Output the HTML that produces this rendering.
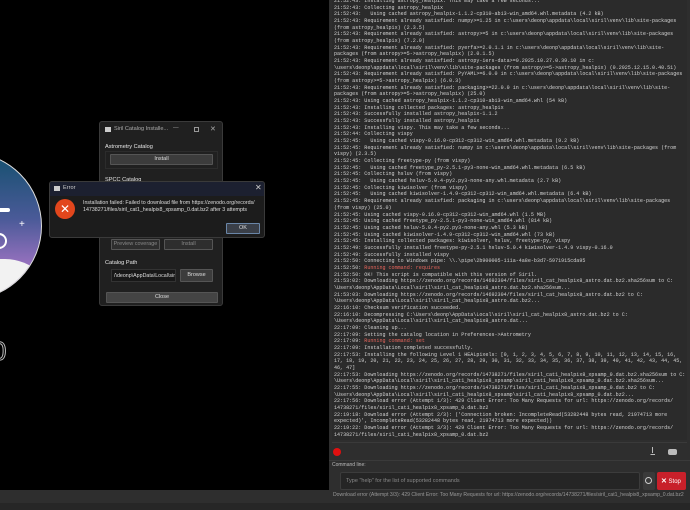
<!DOCTYPE html>
<html><head><meta charset="utf-8"><style>
*{margin:0;padding:0;box-sizing:border-box}
body{width:690px;height:510px;background:#000;position:relative;overflow:hidden;font-family:"Liberation Sans",sans-serif}
.abs{position:absolute}
#log{position:absolute;left:332px;top:0;width:355px;height:440px;background:#2b2b2b;overflow:hidden}
#log pre{position:absolute;left:2px;top:-2px;font-family:"Liberation Mono",monospace;font-size:5.05px;line-height:6.67px;color:#d2d2d2;white-space:pre}
.r{color:#e8655c}
.btn{position:absolute;background:#3c3c3c;border:1px solid #555;color:#ddd;font-size:5.5px;text-align:center;border-radius:1px}
.lbl{position:absolute;color:#e6e6e6;font-size:5.6px}
</style></head><body>
<!-- left logo -->
<div class="abs" style="left:-106px;top:152px;width:148px;height:148px;border-radius:50%;background:linear-gradient(#14506e 0%,#4a5a98 45%,#9a72c0 78%);overflow:hidden;border:1px solid #ddd">
 <div class="abs" style="left:-10px;top:106px;width:170px;height:60px;background:#f2f2f2;border-radius:40px 50px 0 0"></div>
 <div class="abs" style="left:96px;top:80px;width:16px;height:16px;border:2px solid #fff;border-radius:50%"></div>
 <div class="abs" style="left:95px;top:55px;width:20px;height:4px;background:#fff;border-radius:2px"></div>
</div>
<div class="abs" style="left:19px;top:219px;color:#fff;font-size:10px">+</div>
<div class="abs" style="left:-8px;top:336px;color:#000;font-size:26px;-webkit-text-stroke:1px #bbb">0</div>
<!-- right panel background -->
<div class="abs" style="left:329px;top:0;width:361px;height:510px;background:#2e2e2e"></div>
<div class="abs" style="left:0;top:490px;width:690px;height:20px;background:#2e2e2e"></div>
<div class="abs" style="left:0;top:503px;width:690px;height:7px;background:#262626"></div>
<div id="log"><pre>21:52:43: Installing astropy_healpix. This may take a few seconds...
21:52:43: Collecting astropy_healpix
21:52:43:   Using cached astropy_healpix-1.1.2-cp310-abi3-win_amd64.whl.metadata (4.2 kB)
21:52:43: Requirement already satisfied: numpy>=1.25 in c:\users\deonp\appdata\local\siril\venv\lib\site-packages
(from astropy_healpix) (2.3.5)
21:52:43: Requirement already satisfied: astropy>=5 in c:\users\deonp\appdata\local\siril\venv\lib\site-packages
(from astropy_healpix) (7.2.0)
21:52:43: Requirement already satisfied: pyerfa>=2.0.1.1 in c:\users\deonp\appdata\local\siril\venv\lib\site-
packages (from astropy>=5->astropy_healpix) (2.0.1.5)
21:52:43: Requirement already satisfied: astropy-iers-data>=0.2025.10.27.0.39.10 in c:
\users\deonp\appdata\local\siril\venv\lib\site-packages (from astropy>=5->astropy_healpix) (0.2025.12.15.0.40.51)
21:52:43: Requirement already satisfied: PyYAML>=6.0.0 in c:\users\deonp\appdata\local\siril\venv\lib\site-packages
(from astropy>=5->astropy_healpix) (6.0.3)
21:52:43: Requirement already satisfied: packaging>=22.0.0 in c:\users\deonp\appdata\local\siril\venv\lib\site-
packages (from astropy>=5->astropy_healpix) (25.0)
21:52:43: Using cached astropy_healpix-1.1.2-cp310-abi3-win_amd64.whl (54 kB)
21:52:43: Installing collected packages: astropy_healpix
21:52:43: Successfully installed astropy_healpix-1.1.2
21:52:43: Successfully installed astropy_healpix
21:52:43: Installing vispy. This may take a few seconds...
21:52:44: Collecting vispy
21:52:45:   Using cached vispy-0.16.0-cp312-cp312-win_amd64.whl.metadata (9.2 kB)
21:52:45: Requirement already satisfied: numpy in c:\users\deonp\appdata\local\siril\venv\lib\site-packages (from
vispy) (2.3.5)
21:52:45: Collecting freetype-py (from vispy)
21:52:45:   Using cached freetype_py-2.5.1-py3-none-win_amd64.whl.metadata (6.5 kB)
21:52:45: Collecting hsluv (from vispy)
21:52:45:   Using cached hsluv-5.0.4-py2.py3-none-any.whl.metadata (2.7 kB)
21:52:45: Collecting kiwisolver (from vispy)
21:52:45:   Using cached kiwisolver-1.4.9-cp312-cp312-win_amd64.whl.metadata (6.4 kB)
21:52:45: Requirement already satisfied: packaging in c:\users\deonp\appdata\local\siril\venv\lib\site-packages
(from vispy) (25.0)
21:52:45: Using cached vispy-0.16.0-cp312-cp312-win_amd64.whl (1.5 MB)
21:52:45: Using cached freetype_py-2.5.1-py3-none-win_amd64.whl (814 kB)
21:52:45: Using cached hsluv-5.0.4-py2.py3-none-any.whl (5.3 kB)
21:52:45: Using cached kiwisolver-1.4.9-cp312-cp312-win_amd64.whl (73 kB)
21:52:45: Installing collected packages: kiwisolver, hsluv, freetype-py, vispy
21:52:49: Successfully installed freetype-py-2.5.1 hsluv-5.0.4 kiwisolver-1.4.9 vispy-0.16.0
21:52:49: Successfully installed vispy
21:52:50: Connecting to Windows pipe: \\.\pipe\2b900005-111a-4a8e-b3d7-5971915cda95
21:52:50: <span class="r">Running command: requires</span>
21:52:50: OK! This script is compatible with this version of Siril.
21:53:02: Downloading https://zenodo.org/records/14692304/files/siril_cat_healpix8_astro.dat.bz2.sha256sum to C:
\Users\deonp\AppData\Local\siril\siril_cat_healpix8_astro.dat.bz2.sha256sum...
21:53:03: Downloading https://zenodo.org/records/14692304/files/siril_cat_healpix8_astro.dat.bz2 to C:
\Users\deonp\AppData\Local\siril\siril_cat_healpix8_astro.dat.bz2...
22:16:10: Checksum verification succeeded.
22:16:10: Decompressing C:\Users\deonp\AppData\Local\siril\siril_cat_healpix8_astro.dat.bz2 to C:
\Users\deonp\AppData\Local\siril\siril_cat_healpix8_astro.dat...
22:17:09: Cleaning up...
22:17:09: Setting the catalog location in Preferences->Astrometry
22:17:09: <span class="r">Running command: set</span>
22:17:09: Installation completed successfully.
22:17:53: Installing the following Level 1 HEALpixels: [0, 1, 2, 3, 4, 5, 6, 7, 8, 9, 10, 11, 12, 13, 14, 15, 16,
17, 18, 19, 20, 21, 22, 23, 24, 25, 26, 27, 28, 29, 30, 31, 32, 33, 34, 35, 36, 37, 38, 39, 40, 41, 42, 43, 44, 45,
46, 47]
22:17:53: Downloading https://zenodo.org/records/14738271/files/siril_cat1_healpix8_xpsamp_0.dat.bz2.sha256sum to C:
\Users\deonp\AppData\Local\siril\siril_cat1_healpix8_xpsamp\siril_cat1_healpix8_xpsamp_0.dat.bz2.sha256sum...
22:17:55: Downloading https://zenodo.org/records/14738271/files/siril_cat1_healpix8_xpsamp_0.dat.bz2 to C:
\Users\deonp\AppData\Local\siril\siril_cat1_healpix8_xpsamp\siril_cat1_healpix8_xpsamp_0.dat.bz2...
22:17:56: Download error (Attempt 1/3): 429 Client Error: Too Many Requests for url: https://zenodo.org/records/
14738271/files/siril_cat1_healpix8_xpsamp_0.dat.bz2
22:19:18: Download error (Attempt 2/3): ('Connection broken: IncompleteRead(53282448 bytes read, 21974713 more
expected)', IncompleteRead(53282448 bytes read, 21974713 more expected))
22:19:22: Download error (Attempt 3/3): 429 Client Error: Too Many Requests for url: https://zenodo.org/records/
14738271/files/siril_cat1_healpix8_xpsamp_0.dat.bz2</pre></div>
<div class="abs" style="left:332px;top:442px;width:355px;height:1px;background:#3a3a3a"></div>
<div class="abs" style="left:333px;top:448px;width:8px;height:8px;border-radius:50%;background:#e01010"></div>
<div class="abs" style="left:650px;top:447px;width:5px;height:8px;border-bottom:1px solid #bbb;border-left:1px solid transparent"><div class="abs" style="left:1px;top:0;width:1px;height:6px;background:#bbb"></div></div>
<div class="abs" style="left:668px;top:449px;width:9px;height:6px;background:#bbb;border-radius:2px"></div>
<div class="abs" style="left:329px;top:460px;width:361px;height:1px;background:#3a3a3a"></div>
<div class="lbl" style="left:332px;top:462px;font-size:5px;color:#bbb">Command line:</div>
<div class="abs" style="left:340px;top:472px;width:300px;height:18px;background:#252525;border:1px solid #3c3c3c;border-radius:2px;color:#888;font-size:5.5px;padding:5px 0 0 5px">Type "help" for the list of supported commands</div>
<div class="abs" style="left:643px;top:472px;width:12px;height:18px;background:#3a3a3a;border-radius:2px"><div class="abs" style="left:2px;top:5px;width:7px;height:7px;border:1px solid #ccc;border-radius:50%"></div></div>
<div class="abs" style="left:657px;top:472px;width:29px;height:18px;background:#c8202a;border-radius:2px;color:#fff;font-size:6px;padding:5px 0 0 4px"><b style="font-size:7px">✕</b> Stop</div>
<div class="abs" style="left:333px;top:492px;font-size:5.1px;color:#999;white-space:nowrap">Download error (Attempt 3/3): 429 Client Error: Too Many Requests for url: https://zenodo.org/records/14738271/files/siril_cat1_healpix8_xpsamp_0.dat.bz2</div>
<!-- catalog installer window -->
<div class="abs" style="left:99px;top:121px;width:124px;height:185px;background:#202020;border:1px solid #3a3a3a;border-radius:3px">
 <div class="abs" style="left:5px;top:5px;width:6px;height:5px;background:#ccc"></div>
 <div class="lbl" style="left:14px;top:4px;color:#aaa">Siril Catalog Installe...</div>
 <div class="lbl" style="left:73px;top:3px;color:#aaa">—</div>
 <div class="abs" style="left:94px;top:5px;width:5px;height:5px;border:1px solid #999"></div>
 <div class="lbl" style="left:110px;top:3px;color:#aaa;font-size:7px">✕</div>
 <div class="lbl" style="left:5px;top:22px">Astrometry Catalog</div>
 <div class="abs" style="left:5px;top:29px;width:113px;height:18px;border:1px solid #2c2c2c"></div>
 <div class="btn" style="left:10px;top:32px;width:103px;height:11px;line-height:9px">Install</div>
 <div class="lbl" style="left:5px;top:55px">SPCC Catalog</div>
 <div class="btn" style="left:11px;top:117px;width:49px;height:11px;line-height:9px;color:#888;background:#2e2e2e">Preview coverage</div>
 <div class="btn" style="left:64px;top:117px;width:49px;height:11px;line-height:9px;color:#888;background:#2e2e2e">Install</div>
 <div class="lbl" style="left:5px;top:138px">Catalog Path</div>
 <div class="abs" style="left:11px;top:147px;width:65px;height:13px;background:#181818;border:1px solid #333;color:#ddd;font-size:5.3px;padding:3px 0 0 2px;white-space:nowrap;overflow:hidden">/\deonp\AppData\Local\siril</div>
 <div class="btn" style="left:80px;top:147px;width:33px;height:13px;line-height:11px">Browse</div>
 <div class="btn" style="left:6px;top:170px;width:112px;height:11px;line-height:9px;background:#444">Close</div>
</div>
<!-- error dialog -->
<div class="abs" style="left:49px;top:181px;width:216px;height:57px;background:#1c1c1c;border:1px solid #3a3a3a;border-radius:3px;overflow:hidden">
 <div class="abs" style="left:0;top:0;width:216px;height:14px;background:#1c2030"></div>
 <div class="abs" style="left:4px;top:4px;width:6px;height:5px;background:#ccc"></div>
 <div class="lbl" style="left:13px;top:3px;color:#ccc">Error</div>
 <div class="lbl" style="left:205px;top:1px;color:#ccc;font-size:8px">✕</div>
 <div class="abs" style="left:5px;top:17px;width:20px;height:20px;border-radius:50%;background:#e2461c;color:#fff;font-size:12px;text-align:center;line-height:20px">✕</div>
 <div class="lbl" style="left:33px;top:18px;font-size:5.3px;line-height:7px;color:#ddd">Installation failed: Failed to download file from https://zenodo.org/records/<br>14738271/files/siril_cat1_healpix8_xpsamp_0.dat.bz2 after 3 attempts</div>
 <div class="btn" style="left:176px;top:41px;width:34px;height:11px;line-height:9px;background:#3a3f48;border-color:#6a86a8">OK</div>
</div>
</body></html>
